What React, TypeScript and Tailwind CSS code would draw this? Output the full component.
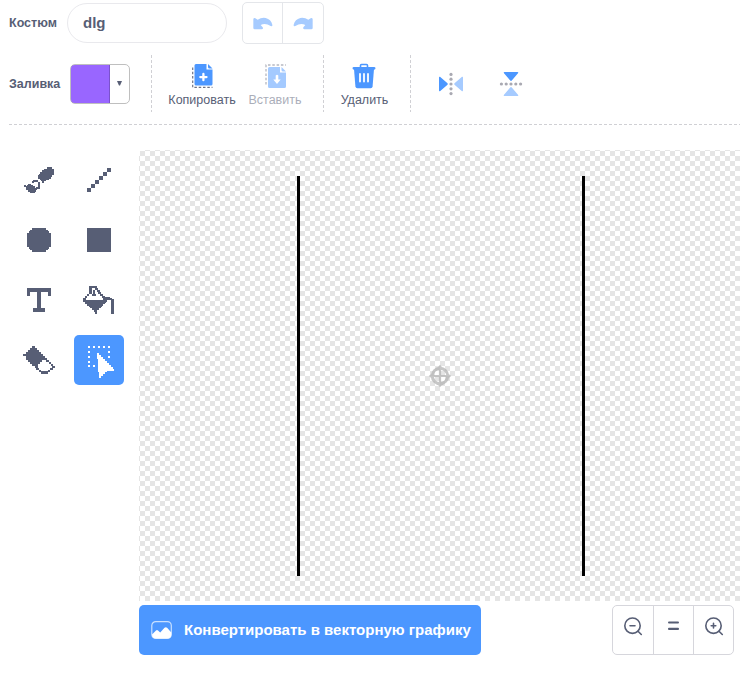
import type { ReactNode } from "react";

const INK = "#575e75";

function Tool({ box, label, active, children }: { box: string; label: string; active?: boolean; children: ReactNode }) {
  return (
    <button aria-label={label} className="flex h-[60px] w-[60px] items-center justify-center">
      <span className={active ? "flex h-[50px] w-[50px] items-center justify-center rounded-[5px] bg-[#4c97ff]" : "flex h-[50px] w-[50px] items-center justify-center"}>
        <svg className="h-[60px] w-[60px] shrink-0" viewBox={box} fill={active ? "#fff" : INK} shapeRendering="crispEdges">
          {children}
        </svg>
      </span>
    </button>
  );
}

// Each run is [top, bottom, left, right] of one block of pixels.
function Runs({ runs }: { runs: number[][] }) {
  return <path d={runs.map(([t, b, l, r]) => `M${l} ${t}H${r}V${b}H${l}z`).join("")} />;
}

const BRUSH = [
  [36, 42, 96, 111], [42, 45, 87, 117], [45, 51, 81, 117], [51, 57, 75, 117], [57, 60, 72, 117],
  [60, 66, 69, 111], [66, 72, 69, 108], [72, 75, 75, 102], [75, 78, 78, 93], [78, 84, 81, 87],
  [75, 81, 54, 69], [78, 84, 51, 57], [81, 102, 69, 75], [96, 102, 63, 72],
  [87, 90, 39, 48], [90, 96, 27, 33], [90, 96, 36, 54], [93, 99, 33, 60], [99, 105, 33, 66], [105, 111, 39, 63], [111, 114, 45, 60],
];
const BUCKET = [
  [33, 39, 60, 81], [33, 57, 57, 66], [39, 45, 75, 84], [45, 51, 81, 90], [51, 57, 84, 93], [57, 63, 90, 99], [63, 69, 96, 105],
  [45, 63, 69, 75], [57, 63, 66, 78], [57, 63, 51, 57], [63, 69, 45, 51], [69, 75, 39, 48], [66, 72, 102, 120],
  [69, 75, 99, 126], [75, 81, 39, 111], [81, 84, 45, 108], [84, 87, 45, 105], [87, 93, 51, 99], [93, 96, 57, 96],
  [96, 99, 60, 93], [99, 105, 66, 87], [105, 111, 72, 81], [111, 117, 75, 81], [72, 117, 123, 132],
];
const ERASER = [
  [213, 219, 51, 60], [219, 225, 45, 66], [225, 231, 39, 72], [231, 237, 33, 78], [237, 243, 24, 84], [243, 249, 33, 90],
  [249, 255, 33, 87], [255, 261, 39, 81], [261, 267, 45, 75], [267, 273, 51, 69], [273, 279, 60, 69],
  [249, 255, 87, 96], [255, 261, 93, 102], [261, 267, 102, 108], [267, 273, 108, 114], [273, 279, 111, 120],
  [279, 285, 105, 114], [285, 291, 99, 105], [288, 297, 78, 99], [285, 291, 72, 78], [279, 285, 63, 72],
];

function PageGlyph({ arrow }: { arrow?: boolean }) {
  return (
    <svg className="h-[26px] w-[24px]" viewBox="0 0 24 26">
      {arrow ? (
        <g>
          <path d="M3 21.500V2H23" fill="none" stroke="#6e7385" strokeWidth="1.300" strokeDasharray="2.500 1.800" />
          <path d="M6.500 4h10.500v5.500H23V23.500a1.500 1.500 0 0 1-1.500 1.500H6.500a1.500 1.500 0 0 1-1.500-1.500V5.500A1.500 1.500 0 0 1 6.500 4z" fill="#4c97ff" />
          <path d="M18.500 4l4.500 4.500h-3a1.500 1.500 0 0 1-1.500-1.500z" fill="#4c97ff" />
          <path d="M12.700 12.500q1.300-1.500 2.600 0v4h2.400L14 21l-3.700-4.500h2.400z" fill="#fff" />
        </g>
      ) : (
        <g>
          <path d="M2.700 4.500V24.300H22.500" fill="none" stroke="#6e7385" strokeWidth="1.200" strokeDasharray="2.500 1.800" />
          <path d="M6 1h10.500v5.500h6V21a1.500 1.500 0 0 1-1.500 1.500H6A1.500 1.500 0 0 1 4.500 21V2.500A1.500 1.500 0 0 1 6 1z" fill="#4c97ff" />
          <path d="M18 1l4.500 4.500h-3a1.500 1.500 0 0 1-1.500-1.500z" fill="#4c97ff" />
          <path d="M13.400 11v6.200M10.300 14.100h6.200" stroke="#fff" strokeWidth="2.300" strokeLinecap="round" />
        </g>
      )}
    </svg>
  );
}

function Undo({ flip }: { flip?: boolean }) {
  return (
    <svg className={flip ? "h-5 w-5 -scale-x-100" : "h-5 w-5"} viewBox="0 0 60 60" fill="#a6cbff">
      <path d="M1 19Q2 13 7 16L14 20Q25 13 38 15Q54 19 58 35Q59 41 53 39Q37 29 23 36L29 43Q32 48 26 49H5Q1 49 1 45z" />
    </svg>
  );
}

function Mirror({ vertical }: { vertical?: boolean }) {
  return (
    <svg className={vertical ? "h-[26px] w-[26px] rotate-90" : "h-[26px] w-[26px]"} viewBox="0 0 26 26">
      <path d="M2 5.800L9.200 12a1.200 1.200 0 0 1 0 2L2 20.200Q1 20.500 1 19.500V6.500Q1 5.500 2 5.800z" fill="#4c97ff" />
      <path d="M24 5.800L16.800 12a1.200 1.200 0 0 0 0 2L24 20.200q1 .3 1-.7V6.500q0-1-1-.7z" fill="#a6cbff" />
      <g fill="#a9a9b2">
        {[3.4, 8.2, 13, 17.800, 22.600].map((y) => <circle key={y} cx="13" cy={y} r="1.600" />)}
      </g>
    </svg>
  );
}

function Zoom({ plus }: { plus?: boolean }) {
  return (
    <svg className="h-5 w-5" viewBox="0 0 20 20" fill="none" stroke={INK} strokeWidth="1.600" strokeLinecap="round">
      <circle cx="9.500" cy="8.700" r="7.700" />
      <path d={plus ? "M15 14.200l3.300 3.300M7.200 8.700h4.600M9.500 6.400v4.600" : "M15 14.200l3.300 3.300M7 8.700h5"} />
    </svg>
  );
}

function DashY() {
  return <div className="mt-px h-[57px] w-px bg-[repeating-linear-gradient(180deg,#d0d0d4_0_3px,transparent_3px_5px)]" />;
}

export default function App() {
  return (
    <main className="flex h-[682px] w-[747px] flex-col overflow-hidden bg-white font-['Liberation_Sans',Arial,sans-serif] text-[#575e75]">
      <header className="ml-[9px] flex h-[125px] w-[731px] flex-col">
        <div className="flex h-[46px] items-center">
          <label className="w-[58px] text-[12.5px] font-bold leading-4">Костюм</label>
          <div className="flex h-10 w-[160px] items-center rounded-full border border-[#e9e9ed] pl-[15px] pt-px text-[15px] font-bold">dlg</div>
          <div className="ml-[15px] flex h-[42px] w-[82px] rounded-[5px] border border-[#e4e6ea]">
            <button aria-label="Отменить" className="flex w-[39px] items-center justify-center"><Undo /></button>
            <button aria-label="Вернуть" className="flex w-[41px] items-center justify-center border-l border-[#e4e6ea]"><Undo flip /></button>
          </div>
        </div>
        <div className="flex h-[79px] pt-2">
          <div className="flex h-[60px] w-[142px] items-center">
            <span className="w-[61px] text-[12.5px] font-bold">Заливка</span>
            <button aria-label="Цвет заливки" className="flex h-10 w-[60px] overflow-hidden rounded-[5px] border border-[#bfbfbf]">
              <span className="-my-px -ml-px w-10 rounded-l-[5px] border border-[#7a52cc] bg-[#96f]" />
              <span className="flex flex-1 items-center justify-center pb-0.5">
                <svg className="h-[5px] w-[5px]" viewBox="0 0 5 5" fill={INK}><path d="M0 0h5L3 4.500H2z" /></svg>
              </span>
            </button>
          </div>
          <DashY />
          <div className="flex h-[58px] w-[171px] pl-3 pt-[9px] text-[12.5px]">
            <button className="flex w-[76px] flex-col items-center"><PageGlyph /><span className="mt-[3px] leading-4">Копировать</span></button>
            <button className="flex w-[70px] flex-col items-center opacity-50"><PageGlyph arrow /><span className="mt-[3px] leading-4">Вставить</span></button>
          </div>
          <DashY />
          <div className="flex h-[58px] w-[86px] justify-center pr-[5px] pt-[9px] text-[12.5px]">
            <button className="flex flex-col items-center">
              <svg className="h-[26px] w-[24px]" viewBox="0 0 24 26">
                <path d="M8.500 4.500V2.500Q8.500 1.500 9.500 1.500h5q1 0 1 1v2" fill="none" stroke="#4c97ff" strokeWidth="1.600" />
                <path d="M2 4h20q1.500 0 1.500 1.300T22 6.700H2Q.5 6.700.5 5.300T2 4z" fill="#4c97ff" />
                <path d="M2 6h20l-1.400 17.300q-.2 2-2 2H5.400q-1.800 0-2-2z" fill="#4c97ff" />
                <path d="M8 11v7.500M12 11v7.500M16 11v7.500" stroke="#fff" strokeWidth="1.800" strokeLinecap="round" />
              </svg>
              <span className="mt-[3px] leading-4">Удалить</span>
            </button>
          </div>
          <DashY />
          <div className="flex h-[60px] items-center gap-[34px] pl-[27px]"><Mirror /><Mirror vertical /></div>
        </div>
        <div className="-mt-px h-px shrink-0 bg-[repeating-linear-gradient(90deg,#d0d0d4_0_3px,transparent_3px_5px)]" />
      </header>

      <div className="flex pt-[25px]">
        <nav className="ml-[9px] grid h-[240px] w-[120px] grid-cols-2">
          <Tool label="Кисть" box="-18 -15 180 180"><Runs runs={BRUSH} /></Tool>
          <Tool label="Линия" box="-3 -15 180 180">
            <path d="M111 39h12v12h-12zM99 51h12v12H99zM87 63h12v12H87zM75 75h12v12H75zM63 87h12v12H63zM51 99h12v12H51z" />
          </Tool>
          <Tool label="Круг" box="-18 -15 180 180">
            <path d="M51 39H93V45H99V48H102V54H108V96H102V102H99V105H93V111H51V105H45V102H42V96H36V54H42V48H45V45H51z" />
          </Tool>
          <Tool label="Прямоугольник" box="0 -15 180 180"><path d="M54 39h72v72H54z" /></Tool>
          <Tool label="Текст" box="-18 -15 180 180"><path d="M36 39h72v24h-9v-12H78v48h12v12H54V99h12V51H45v12H36z" /></Tool>
          <Tool label="Заливка" box="-3 -15 180 180"><Runs runs={BUCKET} /></Tool>
          <Tool label="Ластик" box="-18 165 180 180"><Runs runs={ERASER} /></Tool>
          <Tool label="Выделение" active box="-3 165 180 180">
            {[54, 69, 84, 99, 114].map((x) => <path key={x} d={`M${x} 213h6v6h-6z`} />)}
            {[228, 243, 258, 270].map((y) => <path key={y} d={`M54 ${y}h6v6h-6z`} />)}
            <path d="M114 228h6v6h-6zM114 243h6v6h-6zM69 270h6v6h-6zM81 234h6v6h6v6h6v6h6v6h6v6h6v6h6v6h6v6h3v6h-21v3h-6v6h-6v6h-6v6h-6z" />
          </Tool>
        </nav>
        <section className="ml-[10px] w-[601px]">
          <div className="relative h-[451px] rounded-tl-[4px] bg-[conic-gradient(#fff_25%,#e5e5e5_0_50%,#fff_0_75%,#e5e5e5_0)] bg-[length:10px_10px] bg-[position:1px_1px]">
            <div className="absolute left-[158px] top-[26px] h-[400px] w-[3px] bg-black" />
            <div className="absolute left-[443px] top-[26px] h-[400px] w-[3px] bg-black" />
            <svg className="absolute left-[289px] top-[214px] h-6 w-6 opacity-75" viewBox="0 0 24 24" fill="none" stroke="#b4b4b4">
              <circle cx="12" cy="12" r="7.700" strokeWidth="3" />
              <path d="M12 3v18M3 12h18" strokeWidth="2.200" />
              <path d="M12 .8l2.500 3h-5zM12 23.200l2.500-3h-5zM.8 12l3-2.500v5zM23.200 12l-3-2.500v5z" fill="#b4b4b4" stroke="none" />
            </svg>
          </div>
          <div className="flex justify-between pr-[6px] pt-[4px]">
            <button className="flex h-[50px] w-[342px] items-center rounded-[5px] bg-[#4c97ff] pl-3 text-[15px] font-bold text-white">
              <svg className="h-5 w-[22px]" viewBox="0 0 22 20">
                <rect x=".8" y="1.600" width="19.500" height="16.800" rx="4" fill="none" stroke="#c9e0ff" strokeWidth="1.200" />
                <path d="M1 14.500l4-4q1-.9 2 0L9.200 12.500 13.500 7.800q1.300-1.300 2.600 0L20.300 12.500v2q0 4-4 4H5q-4 0-4-4z" fill="#fff" />
              </svg>
              <span className="ml-[11px] whitespace-nowrap">Конвертировать в векторную графику</span>
            </button>
            <div className="flex h-[50px] w-[122px] rounded-[5px] border border-[#d6d6dc]">
              <button aria-label="Уменьшить" className="flex w-10 justify-center pt-[11px]"><Zoom /></button>
              <button aria-label="Сбросить масштаб" className="flex w-[41px] justify-center border-x border-[#d6d6dc] pt-[15px]">
                <svg className="h-[11px] w-3" viewBox="0 0 12 11" fill={INK}><rect x="0" y=".4" width="11" height="2.200" rx="1" /><rect x="0" y="6.700" width="11" height="2.200" rx="1" /></svg>
              </button>
              <button aria-label="Увеличить" className="flex w-[39px] justify-center pt-[11px]"><Zoom plus /></button>
            </div>
          </div>
        </section>
      </div>
    </main>
  );
}
